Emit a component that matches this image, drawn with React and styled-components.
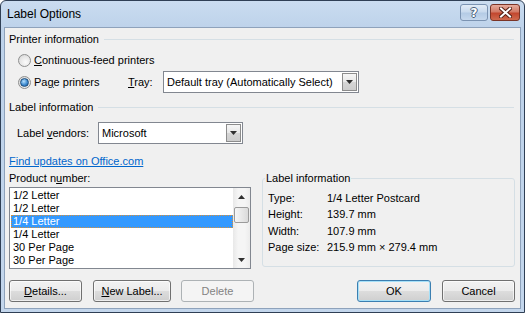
import React from 'react';
import styled, { createGlobalStyle, css } from 'styled-components';

const GlobalStyle = createGlobalStyle`
  html, body { margin: 0; padding: 0; background: #ffffff; }
  body {
    font-family: "Liberation Sans", Arial, sans-serif;
    font-size: 11px;
    color: #000;
  }
  #root { width: 525px; height: 313px; }
  * { box-sizing: border-box; }
`;

const Window = styled.div`
  width: 525px;
  height: 313px;
  border: 1px solid #2f3f55;
  border-radius: 6px 6px 0 0;
  background: linear-gradient(#cadcf0, #bdd2ea 28px, #c3d6ec);
  padding: 0 3px 3px;
  display: flex;
  flex-direction: column;
  overflow: hidden;
`;

const TitleBar = styled.div`
  height: 26px;
  display: flex;
  align-items: flex-start;
  padding-left: 3px;
`;

const Title = styled.div`
  line-height: 27px;
  font-size: 12px;
  flex: 1;
`;

const CaptionButtons = styled.div`
  display: flex;
  gap: 2px;
  margin-top: 3px;
  margin-right: 1px;
`;

const CaptionButton = styled.div`
  height: 17px;
  width: ${(p) => (p.$close ? 30 : 28)}px;
  border-radius: 3px;
  display: flex;
  align-items: center;
  justify-content: center;
  ${(p) =>
    p.$close
      ? css`
          border: 1px solid #7a3426;
          background: linear-gradient(#e6ab9c, #d27a66 45%, #c2472f 55%, #cf6a4e);
        `
      : css`
          border: 1px solid #7b93b2;
          background: linear-gradient(#e2ecf7, #c9daee 45%, #b4cbe5 55%, #c6d8ed);
        `}
`;

const HelpGlyph = styled.span`
  font-family: "DejaVu Sans", sans-serif;
  font-weight: bold;
  font-size: 12px;
  line-height: 12px;
  color: #ffffff;
  text-shadow: 1px 0 0 #4a5f7a, -1px 0 0 #4a5f7a, 0 1px 0 #4a5f7a, 0 -1px 0 #4a5f7a;
`;

const Client = styled.div`
  flex: 1;
  border: 1px solid #8ea2bb;
  background: #f0f0f0;
  padding: 0 5px 0 4px;
  display: flex;
  flex-direction: column;
  white-space: nowrap;
`;

const SectionHeader = styled.div`
  height: 16px;
  line-height: 16px;
  margin-top: ${(p) => p.$mt}px;
  display: flex;
  align-items: center;
  gap: 5px;
  &::after {
    content: '';
    flex: 1;
    height: 1px;
    background: #d5dfe5;
    margin-right: 1px;
  }
`;

const Row = styled.div`
  height: 22px;
  margin-top: ${(p) => p.$mt || 0}px;
  padding-left: ${(p) => p.$indent || 0}px;
  display: flex;
  align-items: center;
`;

const RadioOption = styled.label`
  display: flex;
  align-items: center;
  width: ${(p) => (p.$w ? `${p.$w}px` : 'auto')};
`;

const Radio = styled.span`
  width: 13px;
  height: 13px;
  border-radius: 50%;
  border: 1px solid #8e8f8f;
  background: radial-gradient(circle at 60% 65%, #fbfbfb 0%, #e6e6e6 55%, #d0d0d0 100%);
  margin-right: 3px;
  display: flex;
  align-items: center;
  justify-content: center;
  ${(p) =>
    p.$checked &&
    css`
      &::after {
        content: '';
        width: 7px;
        height: 7px;
        border-radius: 50%;
        border: 1px solid #1f4f7d;
        background: radial-gradient(circle at 40% 35%, #b8e2ff 0%, #3f8bd0 55%, #1a5aa0 100%);
      }
    `}
`;

const FieldLabel = styled.span`
  width: ${(p) => p.$w}px;
  flex: none;
`;

const Combo = styled.div`
  width: ${(p) => p.$w}px;
  height: 22px;
  border: 1px solid #828790;
  background: #ffffff;
  padding: 1px;
  display: flex;
  align-items: stretch;
`;

const ComboText = styled.span`
  flex: 1;
  padding-left: 2px;
  line-height: 18px;
  white-space: nowrap;
  overflow: hidden;
`;

const DropButton = styled.span`
  width: 15px;
  border: 1px solid #8c8c8c;
  background: linear-gradient(#f6f6f6, #e8e8e8 50%, #d6d6d6 50%, #cdcdcd);
  display: flex;
  align-items: center;
  justify-content: center;
`;

const Link = styled.a`
  display: block;
  height: 16px;
  line-height: 16px;
  margin-top: 9px;
  color: #0066cc;
  text-decoration: underline;
  align-self: flex-start;
`;

const Bottom = styled.div`
  margin-top: 1px;
  display: grid;
  grid-template-columns: 242px 1fr;
  column-gap: 11px;
`;

const LeftCol = styled.div`
  display: flex;
  flex-direction: column;
`;

const PlainLabel = styled.div`
  height: 16px;
  line-height: 16px;
  margin-bottom: 1px;
`;

const ListBox = styled.div`
  height: 82px;
  border: 1px solid #828790;
  background: #ffffff;
  display: flex;
  overflow: hidden;
`;

const ListItems = styled.div`
  flex: 1;
  padding: 1px 0 0 1px;
  overflow: hidden;
`;

const ListItem = styled.div`
  height: 13px;
  line-height: 13px;
  padding-left: 2px;
  white-space: nowrap;
  ${(p) =>
    p.$selected &&
    css`
      background: #3399ff;
      color: #ffffff;
      outline: 1px dotted #d98f36;
      outline-offset: -1px;
    `}
`;

const ScrollBar = styled.div`
  width: 17px;
  background: linear-gradient(90deg, #e8e8e8, #f5f5f5 30%, #f5f5f5 70%, #ececec);
  display: flex;
  flex-direction: column;
  align-items: center;
`;

const ScrollArrow = styled.div`
  width: 17px;
  height: 17px;
  display: flex;
  align-items: center;
  justify-content: center;
`;

const Thumb = styled.div`
  width: 15px;
  height: 16px;
  margin-top: 2px;
  border: 1px solid #9b9b9b;
  border-radius: 2px;
  background: linear-gradient(90deg, #f6f6f6, #e8e8e8 50%, #dadada);
`;

const Track = styled.div`
  flex: 1;
`;

const GroupBox = styled.fieldset`
  margin: 0;
  min-width: 0;
  height: 97px;
  border: 1px solid #d5dfe5;
  border-radius: 3px;
  padding: 0 5px;
`;

const Legend = styled.legend`
  margin-left: -3px;
  padding: 0 1px;
  line-height: 16px;
`;

const InfoGrid = styled.div`
  display: grid;
  grid-template-columns: 59px 1fr;
  grid-auto-rows: 16.3px;
  align-items: center;
  margin-top: 4px;
  white-space: nowrap;
`;

const ButtonRow = styled.div`
  margin-top: 11px;
  display: flex;
  align-items: center;
`;

const Button = styled.div`
  width: ${(p) => p.$w}px;
  height: 22px;
  margin-left: ${(p) => p.$ml || 0}px;
  border-radius: 3px;
  display: flex;
  align-items: center;
  justify-content: center;
  border: 1px solid #707070;
  background: linear-gradient(#f2f2f2, #ebebeb 50%, #dddddd 50%, #cfcfcf);
  box-shadow: inset 0 0 0 1px rgba(255, 255, 255, 0.65);
  ${(p) =>
    p.$default &&
    css`
      border-color: #3c7fb1;
      box-shadow: inset 0 0 0 1px #a6e0f8;
    `}
  ${(p) =>
    p.$disabled &&
    css`
      border-color: #adb2b5;
      background: #f4f4f4;
      box-shadow: none;
      color: #838383;
    `}
`;

const Spacer = styled.div`
  flex: 1;
`;

const Arrow = ({ up }) => (
  <svg width="7" height="4" viewBox="0 0 7 4">
    <path d={up ? 'M0 4 L3.5 0 L7 4 Z' : 'M0 0 L7 0 L3.5 4 Z'} fill="#303030" />
  </svg>
);

const ComboBox = ({ w, children }) => (
  <Combo $w={w}>
    <ComboText>{children}</ComboText>
    <DropButton>
      <Arrow />
    </DropButton>
  </Combo>
);

const items = ['1/2 Letter', '1/2 Letter', '1/4 Letter', '1/4 Letter', '30 Per Page', '30 Per Page'];

export default function App() {
  return (
    <>
      <GlobalStyle />
      <Window>
        <TitleBar>
          <Title>Label Options</Title>
          <CaptionButtons>
            <CaptionButton>
              <HelpGlyph>?</HelpGlyph>
            </CaptionButton>
            <CaptionButton $close>
              <svg width="13" height="11" viewBox="0 0 13 11">
                <path
                  d="M2 1.5 L11 9.5 M11 1.5 L2 9.5"
                  stroke="#5a2318"
                  strokeWidth="4"
                  strokeLinecap="square"
                />
                <path
                  d="M2 1.5 L11 9.5 M11 1.5 L2 9.5"
                  stroke="#ffffff"
                  strokeWidth="2"
                  strokeLinecap="square"
                />
              </svg>
            </CaptionButton>
          </CaptionButtons>
        </TitleBar>
        <Client>
          <SectionHeader $mt={3}>Printer information</SectionHeader>
          <Row $mt={2} $indent={9}>
            <RadioOption>
              <Radio />
              <span>
                <u>C</u>ontinuous-feed printers
              </span>
            </RadioOption>
          </Row>
          <Row $indent={9}>
            <RadioOption $w={110}>
              <Radio $checked />
              <span>
                Pa<u>g</u>e printers
              </span>
            </RadioOption>
            <FieldLabel $w={35}>
              <u>T</u>ray:
            </FieldLabel>
            <ComboBox w={196}>Default tray (Automatically Select)</ComboBox>
          </Row>
          <SectionHeader $mt={6}>Label information</SectionHeader>
          <Row $mt={7} $indent={8}>
            <FieldLabel $w={81}>
              Label <u>v</u>endors:
            </FieldLabel>
            <ComboBox w={145}>Microsoft</ComboBox>
          </Row>
          <Link href="#">Find updates on Office.com</Link>
          <Bottom>
            <LeftCol>
              <PlainLabel>
                Product n<u>u</u>mber:
              </PlainLabel>
              <ListBox>
                <ListItems>
                  {items.map((it, i) => (
                    <ListItem key={i} $selected={i === 2}>
                      {it}
                    </ListItem>
                  ))}
                </ListItems>
                <ScrollBar>
                  <ScrollArrow>
                    <Arrow up />
                  </ScrollArrow>
                  <Thumb />
                  <Track />
                  <ScrollArrow>
                    <Arrow />
                  </ScrollArrow>
                </ScrollBar>
              </ListBox>
            </LeftCol>
            <GroupBox>
              <Legend>Label information</Legend>
              <InfoGrid>
                <span>Type:</span>
                <span>1/4 Letter Postcard</span>
                <span>Height:</span>
                <span>139.7 mm</span>
                <span>Width:</span>
                <span>107.9 mm</span>
                <span>Page size:</span>
                <span>215.9 mm × 279.4 mm</span>
              </InfoGrid>
            </GroupBox>
          </Bottom>
          <ButtonRow>
            <Button $w={73}>
              <span>
                <u>D</u>etails...
              </span>
            </Button>
            <Button $w={78} $ml={11}>
              <span>
                <u>N</u>ew Label...
              </span>
            </Button>
            <Button $w={73} $ml={10} $disabled>
              Delete
            </Button>
            <Spacer />
            <Button $w={74} $default>
              OK
            </Button>
            <Button $w={73} $ml={11}>
              Cancel
            </Button>
          </ButtonRow>
        </Client>
      </Window>
    </>
  );
}
